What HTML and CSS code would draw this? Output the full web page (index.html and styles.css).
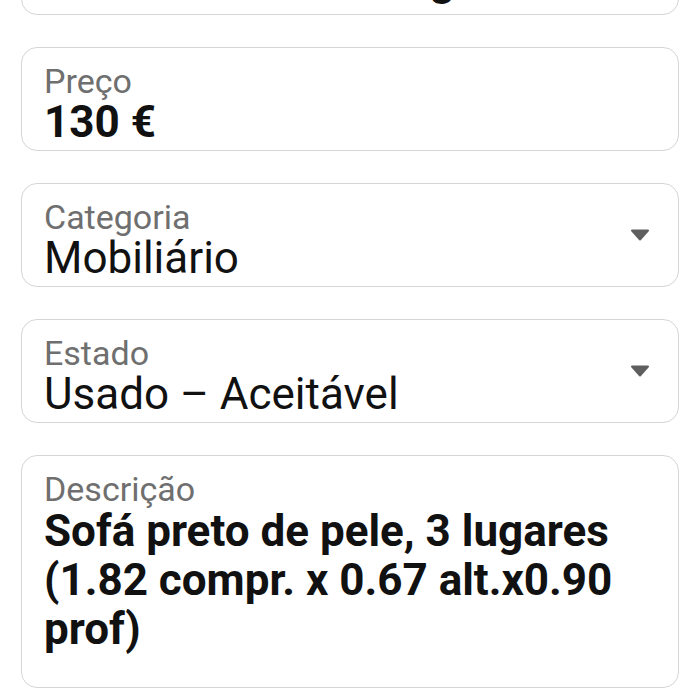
FILE: index.html
```html
<!DOCTYPE html>
<html lang="pt">
<head>
<meta charset="utf-8">
<title>Anúncio</title>
<link rel="stylesheet" href="styles.css">
</head>
<body>
<div class="form">
  <div class="field field-top">
    <div class="field-body">
      <span class="label">Título</span>
      <span class="value bold">Sofá de sala de 3 lugares</span>
    </div>
  </div>
  <div class="field">
    <div class="field-body">
      <span class="label">Preço</span>
      <span class="value bold">130 €</span>
    </div>
  </div>
  <div class="field select">
    <div class="field-body">
      <span class="label">Categoria</span>
      <span class="value">Mobiliário</span>
    </div>
    <svg class="arrow" width="20" height="12" viewBox="0 0 20 12"><path d="M2 1.5 H18 L10 10.5 Z" fill="#5f5f5f" stroke="#5f5f5f" stroke-width="2" stroke-linejoin="round"/></svg>
  </div>
  <div class="field select">
    <div class="field-body">
      <span class="label">Estado</span>
      <span class="value">Usado – Aceitável</span>
    </div>
    <svg class="arrow" width="20" height="12" viewBox="0 0 20 12"><path d="M2 1.5 H18 L10 10.5 Z" fill="#5f5f5f" stroke="#5f5f5f" stroke-width="2" stroke-linejoin="round"/></svg>
  </div>
  <div class="field field-desc">
    <div class="field-body">
      <span class="label">Descrição</span>
      <span class="value bold desc">Sofá preto de pele, 3 lugares (1.82 compr. x 0.67 alt.x0.90 prof)</span>
    </div>
  </div>
</div>
</body>
</html>
```
FILE: styles.css
```css
html, body {
  margin: 0;
  padding: 0;
  background: #ffffff;
}
body {
  width: 699px;
  height: 699px;
  overflow: hidden;
  font-family: Roboto, "Noto Sans", sans-serif;
}
.form {
  display: flex;
  flex-direction: column;
  gap: 32px;
  padding: 0 20px 0 21px;
  margin-top: -89px;
}
.field {
  box-sizing: border-box;
  height: 104px;
  border: 1px solid #d5d5d5;
  border-radius: 16px;
  padding: 15px 22px 0 22px;
  display: flex;
  align-items: flex-start;
}
.field-top {
  padding-top: 9px;
}
.field-body {
  flex: 1;
  display: flex;
  flex-direction: column;
  min-width: 0;
}
.label {
  font-size: 34px;
  line-height: 36px;
  color: #6f6f6f;
}
.value {
  font-size: 44px;
  line-height: 46px;
  color: #111111;
  white-space: nowrap;
}
.bold {
  font-weight: 700;
}
.select {
  padding-right: 28px;
}
.arrow {
  align-self: center;
  margin-top: -15px;
  flex: none;
}
.field-desc {
  height: 233px;
}
.desc {
  white-space: normal;
  line-height: 49px;
  padding-right: 20px;
}
```
